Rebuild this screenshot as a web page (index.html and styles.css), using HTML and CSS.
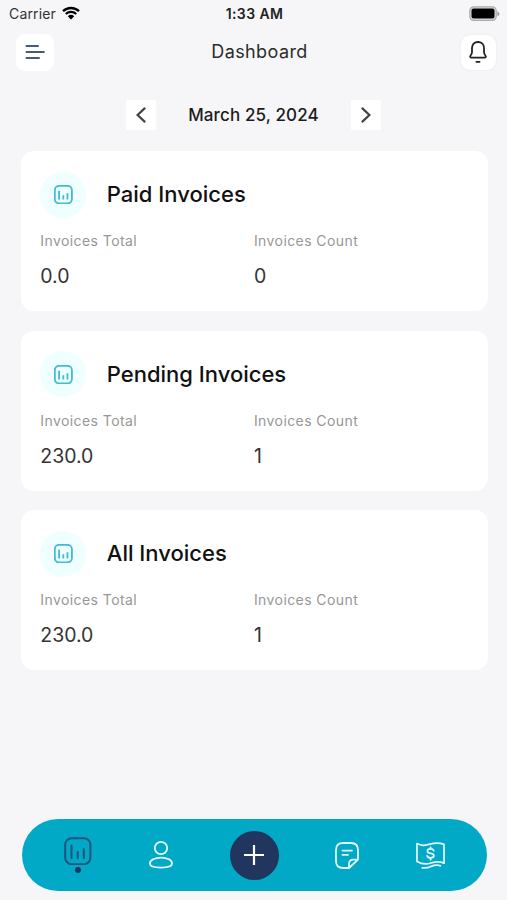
FILE: index.html
```html
<!DOCTYPE html>
<html lang="en">
<head>
<meta charset="utf-8">
<title>Dashboard</title>
<link rel="stylesheet" href="styles.css">
</head>
<body>
<svg class="defs" aria-hidden="true">
  <symbol id="chart" viewBox="0 0 28 28">
    <rect x="1.2" y="1.2" width="25.2" height="26" rx="6.5"/>
    <path d="M7.5 8.500v12.700M13.700 15v6.200M19.800 12v9.200"/>
  </symbol>
</svg>
<div class="screen">
  <div class="status">
    <div class="carrier"><span>Carrier</span>
      <svg class="wifi" viewBox="0 0 18 14"><path d="M1 5.2a11.6 11.6 0 0 1 16 0M3.8 8a7.6 7.6 0 0 1 10.400 0" fill="none" stroke="#000" stroke-width="2.3"/><path d="M5.8 10.3a4.7 4.7 0 0 1 6.400 0L9 13.500z"/></svg>
    </div>
    <div class="time">1:33 AM</div>
    <svg class="battery" viewBox="0 0 31 16"><rect x=".8" y=".8" width="26.4" height="13.6" rx="4" fill="#dedede" stroke="#aaa" stroke-width="1.2"/><rect x="2.5" y="2.6" width="23" height="10" rx="2"/><path d="M28.4 5.2v5q2-1 2-2.5t-2-2.500" fill="#999"/></svg>
  </div>
  <header class="header">
    <button class="square menu" aria-label="Menu"><svg viewBox="0 0 20 16"><path d="M1.500 2h11.500M1.500 8h17.300M1.500 14h12.500"/></svg></button>
    <h1>Dashboard</h1>
    <button class="square bell" aria-label="Notifications"><svg viewBox="0 0 20 24"><path d="M10 2c-3.600 0-6 2.600-6 6v4c0 1.500-.5 2.500-1.400 3.500-.9 1-.5 2.100.8 2.100h13.200c1.300 0 1.700-1.100.8-2.100-.9-1-1.400-2-1.400-3.500V8c0-3.400-2.400-6-6-6z"/><path d="M8.400 21.800h3.200"/></svg></button>
  </header>
  <div class="date">
    <button class="arrow" aria-label="Previous day"><svg viewBox="0 0 10 16"><path d="M8.600 1.400 1.600 8l7 6.600"/></svg></button>
    <span>March 25, 2024</span>
    <button class="arrow" aria-label="Next day"><svg viewBox="0 0 10 16"><path d="m1.400 1.400 7 6.600-7 6.600"/></svg></button>
  </div>
  <main class="cards">
    <section class="card">
      <div class="title"><div class="badge"><svg><use href="#chart"/></svg></div><h2>Paid Invoices</h2></div>
      <dl><div><dt>Invoices Total</dt><dd>0.0</dd></div><div><dt>Invoices Count</dt><dd>0</dd></div></dl>
    </section>
    <section class="card">
      <div class="title"><div class="badge"><svg><use href="#chart"/></svg></div><h2>Pending Invoices</h2></div>
      <dl><div><dt>Invoices Total</dt><dd>230.0</dd></div><div><dt>Invoices Count</dt><dd>1</dd></div></dl>
    </section>
    <section class="card">
      <div class="title"><div class="badge"><svg><use href="#chart"/></svg></div><h2>All Invoices</h2></div>
      <dl><div><dt>Invoices Total</dt><dd>230.0</dd></div><div><dt>Invoices Count</dt><dd>1</dd></div></dl>
    </section>
  </main>
  <nav class="nav">
    <a class="active"><svg class="i-chart"><use href="#chart"/></svg><i></i></a>
    <a><svg class="i-user" viewBox="0 0 24 28"><circle cx="12" cy="7" r="6.200"/><path d="M.9 22.600c0-3.400 5-6 11.100-6s11.100 2.600 11.100 6c0 2.800-3.600 4-11.100 4s-11.100-1.200-11.100-4z"/></svg></a>
    <a class="add"><svg viewBox="0 0 20 20"><path d="M10 0v20M0 10h20"/></svg></a>
    <a><svg class="i-note" viewBox="0 0 24 27"><path d="M14 26H8q-7 0-7-7V8q0-7 7-7h8q7 0 7 7v9.600L14 26v-4q0-4.400 4.400-4.400H23M7.500 8.600h9.500M7.500 12.800h5.500"/></svg></a>
    <a><svg class="i-money" viewBox="0 0 30 27"><path d="M1 1.200c4 2.300 8 2.300 13.500.6S25 .5 29 2v19.500c-4-2-8-2-13.500-.2S5 22 1 19.600zM6.500 26.200c3.500.3 6-.1 9-1.400 4-1.600 6.500-1.800 9.700-.7"/><path d="M18.400 8.600c-.5-1.300-1.700-1.900-3.400-1.900-2 0-3.200.9-3.200 2.300 0 3.300 6.700 1.300 6.700 4.600 0 1.500-1.400 2.400-3.400 2.400-1.800 0-3.100-.7-3.600-2.100M15.100 5v1.700M15.100 16v1.800"/></svg></a>
  </nav>
</div>
</body>
</html>
```
FILE: styles.css
```css
* { box-sizing: border-box; }
body { margin: 0; background: #f6f6f9; color: #111; font-family: Inter, "Liberation Sans", sans-serif; }
button { border: 0; padding: 0; }
svg { display: block; overflow: visible; }
h1, h2, dl, dt, dd { margin: 0; font-weight: 400; }
.defs { display: none; }
.screen { height: 900px; display: flex; flex-direction: column; overflow: hidden; }

.status { height: 27px; padding: 0 7px 0 9px; display: grid; grid-template-columns: 1fr auto 1fr; align-items: center; font-size: 14px; }
.carrier { display: flex; align-items: center; gap: 6px; color: #333; letter-spacing: .15px; }
.wifi { width: 18px; height: 14px; margin-top: -2px; }
.time { font-weight: 600; font-size: 14px; letter-spacing: .4px; color: #222; }
.battery { width: 31px; height: 16px; justify-self: end; }

.header { height: 49px; padding: 1px 11px 0 16px; display: flex; align-items: center; justify-content: space-between; }
.header h1 { margin: -1px 0 0 4px; font-size: 18px; letter-spacing: .4px; color: #2c2c2c; }
.square { display: grid; place-items: center; width: 38px; height: 37px; border-radius: 9px; background: #fff; }
.square svg { fill: none; stroke-linecap: round; }
.menu svg { width: 20px; height: 16px; stroke: #4a5878; stroke-width: 2; }
.bell { width: 35px; height: 35px; box-shadow: 0 0 2px #e2e2e6; }
.bell svg { width: 20px; height: 24px; stroke: #222; stroke-width: 1.800; }

.date { margin-top: 24px; height: 30px; display: flex; justify-content: center; gap: 32px; align-items: center; font-size: 17px; font-weight: 500; letter-spacing: .13px; color: #1c1c1c; }
.arrow { width: 30px; height: 30px; background: #fff; display: grid; place-items: center; }
.arrow svg { width: 10px; height: 16px; fill: none; stroke: #444; stroke-width: 2.200; stroke-linecap: round; }

.cards { padding: 21px 19.500px 0 20.500px; display: flex; flex-direction: column; gap: 19.600px; }
.card { height: 160px; padding: 20px 20px 20px 19.800px; background: #fff; border-radius: 13px; }
.title { display: flex; align-items: center; gap: 20.500px; height: 47px; }
.title h2 { margin-top: -1px; font-size: 22px; font-weight: 500; color: #111; }
.badge { width: 46px; height: 46px; border-radius: 50%; background: #effefe; display: grid; place-items: center; }
.badge svg { width: 19px; height: 19px; fill: none; stroke: #42bccf; stroke-width: 2.700; }
dl { display: grid; grid-template-columns: 1fr 1fr; margin-top: 13px; }
dt { font-size: 14px; line-height: 20px; letter-spacing: .42px; color: #979797; }
dd { margin-top: 12px; font-size: 19.500px; line-height: 26px; letter-spacing: -.05px; color: #333; }

.nav { margin: auto 20.500px 9px 21.500px; height: 72px; padding: 0 42px; border-radius: 36px; background: #02a9c7; display: flex; align-items: center; justify-content: space-between; }
.nav svg { fill: none; stroke: #e4f8fb; stroke-width: 1.800; stroke-linecap: round; stroke-linejoin: round; }
.active { display: flex; flex-direction: column; align-items: center; }
.active i { width: 6px; height: 6px; border-radius: 50%; background: #1d3764; margin-top: 2px; }
.nav .i-chart { width: 28px; height: 28px; stroke: #1b5580; stroke-width: 2; }
.i-user { width: 24px; height: 28px; margin-left: 1px; }
.i-note { width: 24px; height: 27px; }
.i-money { width: 29px; height: 27px; }
.add { width: 49px; height: 49px; border-radius: 50%; background: #20365f; display: grid; place-items: center; }
.nav .add svg { width: 20px; height: 20px; stroke: #fff; stroke-width: 2.200; stroke-linecap: butt; }
```
